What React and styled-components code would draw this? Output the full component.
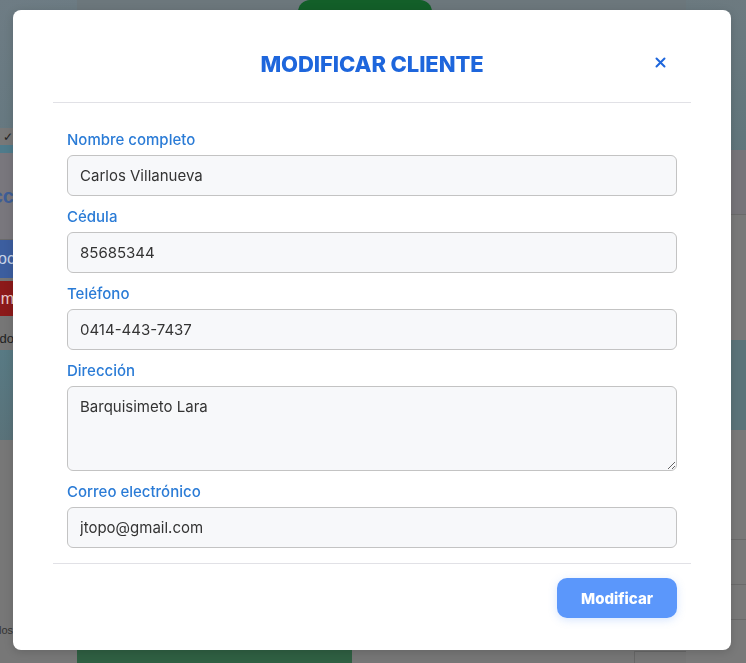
import React from "react";
import styled, { createGlobalStyle } from "styled-components";

const Global = createGlobalStyle`
  html, body { margin: 0; padding: 0; }
  body { width: 746px; height: 663px; overflow: hidden; font-family: Inter, "Noto Sans", sans-serif; }
  * { box-sizing: border-box; }
`;

/* ---------- dimmed page behind the dialog ---------- */
const Page = styled.div`
  width: 746px;
  height: 663px;
  display: grid;
  grid-template-columns: 77px 1fr 60px;
  background: #767676;
  overflow: hidden;
`;

const SideCol = styled.div`
  display: flex;
  flex-direction: column;
`;

const Band = styled.div`
  height: ${(p) => p.$h}px;
  background: ${(p) => p.$bg || "transparent"};
  color: ${(p) => p.$color || "#222"};
  border-bottom: ${(p) => (p.$line ? "1px solid #6a6a6a" : "none")};
  font-family: "Liberation Sans", Arial, sans-serif;
  font-size: ${(p) => p.$fs || 15}px;
  font-weight: ${(p) => p.$fw || 400};
  display: flex;
  align-items: center;
  padding: 0 2px;
  white-space: nowrap;
  overflow: hidden;
`;

const LeftBand = styled(Band)`
  justify-content: flex-end;
  padding-right: ${(p) => p.$pr ?? 64}px;
`;

const RightBand = styled(Band)`
  justify-content: flex-start;
  padding-left: ${(p) => p.$pl ?? 4}px;
`;

const MidCol = styled.div`
  display: flex;
  flex-direction: column;
  justify-content: space-between;
  background: linear-gradient(180deg, #6c777c 0%, #6e777a 20%, #767676 21%);
`;

const TopGreen = styled.div`
  margin-left: 221px;
  width: 134px;
  height: 14px;
  background: #135f29;
  border-radius: 12px 12px 0 0;
`;

const BottomRow = styled.div`
  display: flex;
  align-items: flex-end;
  justify-content: space-between;
  height: 20px;
`;

const BottomGreen = styled.div`
  width: 275px;
  height: 20px;
  background: #2f5f42;
`;

const TableBit = styled.div`
  width: 52px;
  height: 12px;
  border-top: 1px solid #666;
  border-left: 1px solid #666;
`;

/* ---------- dialog ---------- */
const Overlay = styled.div`
  position: fixed;
  inset: 0;
  display: flex;
  align-items: flex-start;
  justify-content: flex-start;
  padding: 10px 0 0 13px;
`;

const Modal = styled.div`
  width: 718px;
  height: 640px;
  background: #fff;
  border-radius: 8px;
  padding: 0 40px;
  display: flex;
  flex-direction: column;
  box-shadow: 0 2px 10px rgba(0, 0, 0, 0.15);
`;

const Header = styled.div`
  height: 93px;
  display: grid;
  grid-template-columns: 1fr auto 1fr;
  align-items: center;
  border-bottom: 1px solid #e1e1e6;
  padding-top: 16px;
`;

const Title = styled.h2`
  grid-column: 2;
  margin: 0;
  font-family: Inter, "Noto Sans", sans-serif;
  font-size: 22px;
  font-weight: 800;
  letter-spacing: -0.1px;
  color: #1e66dc;
`;

const CloseBtn = styled.button`
  grid-column: 3;
  justify-self: end;
  margin-right: 25px;
  margin-top: -4px;
  border: 0;
  background: none;
  padding: 0;
  width: 12px;
  height: 12px;
  display: flex;
  align-items: center;
  justify-content: center;
  cursor: pointer;
`;

const Body = styled.form`
  flex: 1;
  padding: 26px 14px 0;
  display: flex;
  flex-direction: column;
  gap: 10px;
`;

const Field = styled.div`
  display: flex;
  flex-direction: column;
`;

const Label = styled.label`
  font-size: 15px;
  line-height: 22px;
  font-weight: 500;
  color: #2a7bd6;
  margin-bottom: 4px;
`;

const inputBase = `
  width: 100%;
  border: 1px solid #c3c3c3;
  border-radius: 6px;
  background: #f7f8fa;
  font-family: Inter, "Noto Sans", sans-serif;
  font-size: 15px;
  color: #333;
  padding: 0 12px;
  outline: none;
`;

const Input = styled.input`
  ${inputBase}
  height: 41px;
`;

const TextArea = styled.textarea`
  ${inputBase}
  height: 85px;
  padding-top: 10px;
  line-height: 20px;
  resize: vertical;
`;

const Footer = styled.div`
  height: 87px;
  border-top: 1px solid #e1e1e6;
  display: flex;
  justify-content: flex-end;
  align-items: flex-start;
  padding: 14px 14px 0;
`;

const SubmitBtn = styled.button`
  width: 120px;
  height: 40px;
  border: 0;
  border-radius: 10px;
  background: #5b97fb;
  color: #fff;
  font-family: Inter, "Noto Sans", sans-serif;
  font-size: 15px;
  font-weight: 800;
  box-shadow: 0 2px 8px rgba(91, 151, 251, 0.25);
  cursor: pointer;
`;

const fields = [
  { label: "Nombre completo", value: "Carlos Villanueva" },
  { label: "Cédula", value: "85685344" },
  { label: "Teléfono", value: "0414-443-7437" },
  { label: "Dirección", value: "Barquisimeto Lara", area: true },
  { label: "Correo electrónico", value: "jtopo@gmail.com" },
];

export default function App() {
  return (
    <>
      <Global />
      <Page>
        <SideCol>
          <LeftBand $h={128} $bg="linear-gradient(160deg,#6e7c84,#657880)" />
          <LeftBand $h={17} $bg="#787878" $fs={12}>✓</LeftBand>
          <LeftBand $h={8} $bg="#4f7b8b" />
          <LeftBand $h={25} $bg="#79777d" />
          <LeftBand $h={36} $bg="#79777d" $color="#3e5e96" $fs={20} $fw={700} $pr={63}>cc</LeftBand>
          <LeftBand $h={26} $bg="#79777d" $line />
          <LeftBand $h={38} $bg="#3c5e9f" $color="#c8d4e8" $fs={16} $pr={62}>oc</LeftBand>
          <LeftBand $h={3} $bg="#767676" />
          <LeftBand $h={35} $bg="#8c1a1a" $color="#e9caca" $fs={16} $pr={63}>lim</LeftBand>
          <LeftBand $h={10} $bg="#767676" />
          <LeftBand $h={24} $bg="#767676" $fs={13} $pr={63}>do</LeftBand>
          <LeftBand $h={90} $bg="linear-gradient(170deg,#587a84,#5a7178)" />
          <LeftBand $h={180} $bg="#777777" />
          <LeftBand $h={20} $bg="#777777" $fs={11} $color="#333" $pr={64}>los</LeftBand>
          <LeftBand $h={23} $bg="#777777" />
        </SideCol>
        <MidCol>
          <TopGreen />
          <BottomRow>
            <BottomGreen />
            <TableBit />
          </BottomRow>
        </MidCol>
        <SideCol>
          <RightBand $h={150} $bg="linear-gradient(200deg,#6d7a80,#5f757b)" />
          <RightBand $h={65} $bg="#767479" $line />
          <RightBand $h={125} $bg="#797979" $color="#4b2a7a" $fs={15} $pl={2}>.co</RightBand>
          <RightBand $h={90} $bg="#5b7379" />
          <RightBand $h={110} $bg="#797979" $line />
          <RightBand $h={45} $bg="#797979" $fs={15} $fw={700} $color="#222" $line>(%</RightBand>
          <RightBand $h={35} $bg="#797979" $line />
          <RightBand $h={43} $bg="#797979" $fs={14} $fw={700} $color="#222" $pl={0}>%</RightBand>
        </SideCol>
      </Page>

      <Overlay>
        <Modal role="dialog">
          <Header>
            <Title>MODIFICAR CLIENTE</Title>
            <CloseBtn type="button" aria-label="Cerrar">
              <svg width="11" height="11" viewBox="0 0 11 11">
                <path d="M1.5 1.5 L9.5 9.5 M9.5 1.5 L1.5 9.5" stroke="#1e66dc" strokeWidth="2" strokeLinecap="round" />
              </svg>
            </CloseBtn>
          </Header>
          <Body onSubmit={(e) => e.preventDefault()}>
            {fields.map((f) => (
              <Field key={f.label}>
                <Label>{f.label}</Label>
                {f.area ? (
                  <TextArea defaultValue={f.value} />
                ) : (
                  <Input defaultValue={f.value} />
                )}
              </Field>
            ))}
          </Body>
          <Footer>
            <SubmitBtn type="button">Modificar</SubmitBtn>
          </Footer>
        </Modal>
      </Overlay>
    </>
  );
}
